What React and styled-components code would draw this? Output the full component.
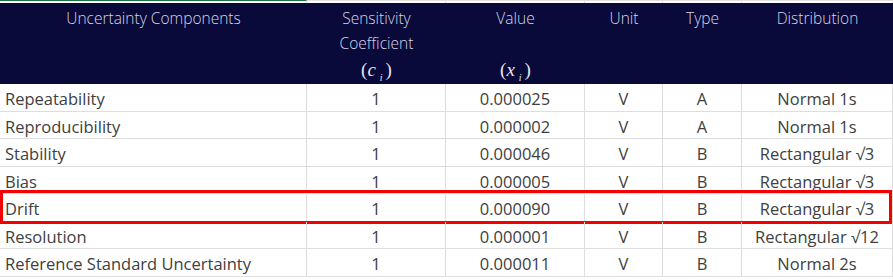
import styled, { createGlobalStyle } from "styled-components";

const GlobalStyle = createGlobalStyle`
  html, body {
    margin: 0;
    padding: 0;
    background: #fff;
  }
`;

const COLS = "307px 139px 139px 78px 79px 151px";

const Sheet = styled.div`
  width: 893px;
  font-family: "Open Sans", "Liberation Sans", sans-serif;
`;

const TopStrip = styled.div`
  display: grid;
  grid-template-columns: ${COLS};
  height: 3px;
`;

const StripCell = styled.div`
  border-top: 1px solid ${(p) => (p.$active ? "#1e7145" : "#e2e2e2")};
  border-right: 1px solid #e2e2e2;
`;

const HeaderRow = styled.div`
  display: grid;
  grid-template-columns: ${COLS};
  height: 81px;
  background: #09093a;
`;

const HeadCell = styled.div`
  display: flex;
  flex-direction: column;
  justify-content: space-between;
  align-items: center;
  padding: 3px 0 0;
  color: #d6d6e6;
  font-size: 15.5px;
  font-weight: 300;
  line-height: 25px;
  text-align: center;
`;

const HeadLabel = styled.div``;

const MathLabel = styled.div`
  font-family: "Liberation Serif", "DejaVu Serif", serif;
  font-style: italic;
  font-size: 19px;
  line-height: 27px;
  color: #e4e4ee;

  sub {
    font-size: 10px;
    margin: 0 3px 0 4px;
  }
`;

const Paren = styled.span`
  font-style: normal;
`;

const Row = styled.div`
  position: relative;
  display: grid;
  grid-template-columns: ${COLS};
  height: ${(p) => p.$h}px;
  box-sizing: border-box;
  border-bottom: 1px solid #dedede;

  ${(p) =>
    p.$highlight &&
    `
    &::after {
      content: "";
      position: absolute;
      top: -4px;
      bottom: -3px;
      left: 0;
      right: 1px;
      border: 3px solid #f40000;
      pointer-events: none;
    }
  `}
`;

const Cell = styled.div`
  display: flex;
  align-items: center;
  justify-content: ${(p) => (p.$left ? "flex-start" : "center")};
  padding-left: ${(p) => (p.$left ? "5px" : "0")};
  padding-top: 2px;
  border-right: 1px solid #dedede;
  color: #404040;
  font-size: 16.5px;
  white-space: nowrap;
`;

const rows = [
  ["Repeatability", "0.000025", "A", "Normal 1s", 28],
  ["Reproducibility", "0.000002", "A", "Normal 1s", 27],
  ["Stability", "0.000046", "B", "Rectangular √3", 28],
  ["Bias", "0.000005", "B", "Rectangular √3", 27],
  ["Drift", "0.000090", "B", "Rectangular √3", 28, true],
  ["Resolution", "0.000001", "B", "Rectangular √12", 27],
  ["Reference Standard Uncertainty", "0.000011", "B", "Normal 2s", 28],
];

export default function App() {
  return (
    <Sheet>
      <GlobalStyle />
      <TopStrip>
        <StripCell $active />
        <StripCell />
        <StripCell />
        <StripCell />
        <StripCell />
        <StripCell />
      </TopStrip>
      <HeaderRow>
        <HeadCell>
          <HeadLabel>Uncertainty Components</HeadLabel>
        </HeadCell>
        <HeadCell>
          <HeadLabel>
            Sensitivity
            <br />
            Coefficient
          </HeadLabel>
          <MathLabel>
            <Paren>(</Paren>c<sub>i</sub>
            <Paren>)</Paren>
          </MathLabel>
        </HeadCell>
        <HeadCell>
          <HeadLabel>Value</HeadLabel>
          <MathLabel>
            <Paren>(</Paren>x<sub>i</sub>
            <Paren>)</Paren>
          </MathLabel>
        </HeadCell>
        <HeadCell>
          <HeadLabel>Unit</HeadLabel>
        </HeadCell>
        <HeadCell>
          <HeadLabel>Type</HeadLabel>
        </HeadCell>
        <HeadCell>
          <HeadLabel>Distribution</HeadLabel>
        </HeadCell>
      </HeaderRow>
      {rows.map(([name, value, type, dist, h, hl]) => (
        <Row key={name} $h={h} $highlight={hl}>
          <Cell $left>{name}</Cell>
          <Cell>1</Cell>
          <Cell>{value}</Cell>
          <Cell>V</Cell>
          <Cell>{type}</Cell>
          <Cell>{dist}</Cell>
        </Row>
      ))}
    </Sheet>
  );
}
